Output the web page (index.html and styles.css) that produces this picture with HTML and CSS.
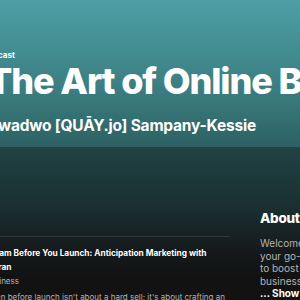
FILE: index.html
```html
<!DOCTYPE html>
<html lang="en">
<head>
<meta charset="utf-8">
<title>The Art of Online Business</title>
<link rel="stylesheet" href="styles.css">
</head>
<body>
<div class="page">
  <header class="hero">
    <div class="kind">Podcast</div>
    <h1 class="title">The Art of Online Business</h1>
    <div class="author">Kwadwo [QUĀY.jo] Sampany-Kessie</div>
  </header>
  <main class="content">
    <section class="episodes">
      <article class="episode">
        <h2 class="ep-title">Dream Before You Launch: Anticipation Marketing with Kieran</h2>
        <div class="ep-meta">Business</div>
        <p class="ep-desc">Open before launch isn't about a hard sell; it's about crafting an experience your audience can't wait to join.</p>
      </article>
    </section>
    <aside class="about">
      <h2 class="about-title">About</h2>
      <p class="about-text">Welcome to The Art of Online Business,<br>your go-to podcast for practical strategies<br>to boost profits and grow your online<br>business, Whether you're just starting out</p>
      <div class="show-more">... Show more</div>
    </aside>
  </main>
</div>
</body>
</html>
```

FILE: styles.css
```css
html, body {
  margin: 0;
  padding: 0;
}

body {
  width: 300px;
  height: 300px;
  overflow: hidden;
  background: #121212;
  color: #ffffff;
  font-family: Inter, "Noto Sans", sans-serif;
}

.page {
  width: 620px;
  margin-left: -12px;
}

.hero {
  height: 147px;
  box-sizing: border-box;
  display: flex;
  flex-direction: column;
  justify-content: flex-end;
  padding-bottom: 12px;
  background: linear-gradient(180deg, #4ca0a6 0%, #3b7e81 60%, #2d6163 100%);
}

.kind {
  font-size: 8px;
  font-weight: 700;
  margin-left: -5px;
  line-height: 10px;
}

.title {
  margin: 1px 0 16px;
  font-size: 36px;
  font-weight: 800;
  letter-spacing: -1.1px;
  line-height: 40px;
  white-space: nowrap;
}

.author {
  font-size: 15.5px;
  font-weight: 700;
  letter-spacing: -0.2px;
  line-height: 18px;
  white-space: nowrap;
}

.content {
  display: flex;
  gap: 25px;
  min-height: 200px;
  background: linear-gradient(180deg, #214244 0%, #1b2f31 60px, #15191b 105px, #121212 130px);
}

.episodes {
  width: 245px;
  flex: none;
  margin-left: -3px;
  padding-top: 89px;
}

.episode {
  border-top: 1px solid rgba(255, 255, 255, 0.1);
  padding-top: 9px;
}

.ep-title {
  margin: 0;
  font-size: 8.3px;
  font-weight: 700;
  line-height: 14px;
}

.ep-meta {
  margin-top: 1px;
  font-size: 8px;
  line-height: 13px;
  color: #b3b3b3;
}

.ep-desc {
  margin: 3px 0 0;
  font-size: 8px;
  line-height: 13px;
  color: #b3b3b3;
}

.about {
  width: 260px;
  flex: none;
  margin-left: 5px;
  padding-top: 62px;
}

.about-title {
  margin: 0;
  font-size: 13.5px;
  font-weight: 800;
  letter-spacing: -0.3px;
  line-height: 18px;
}

.about-text {
  margin: 10px 0 0;
  font-size: 10px;
  line-height: 12.5px;
  color: #b3b3b3;
}

.show-more {
  font-size: 10px;
  font-weight: 700;
  line-height: 12.5px;
}
```
